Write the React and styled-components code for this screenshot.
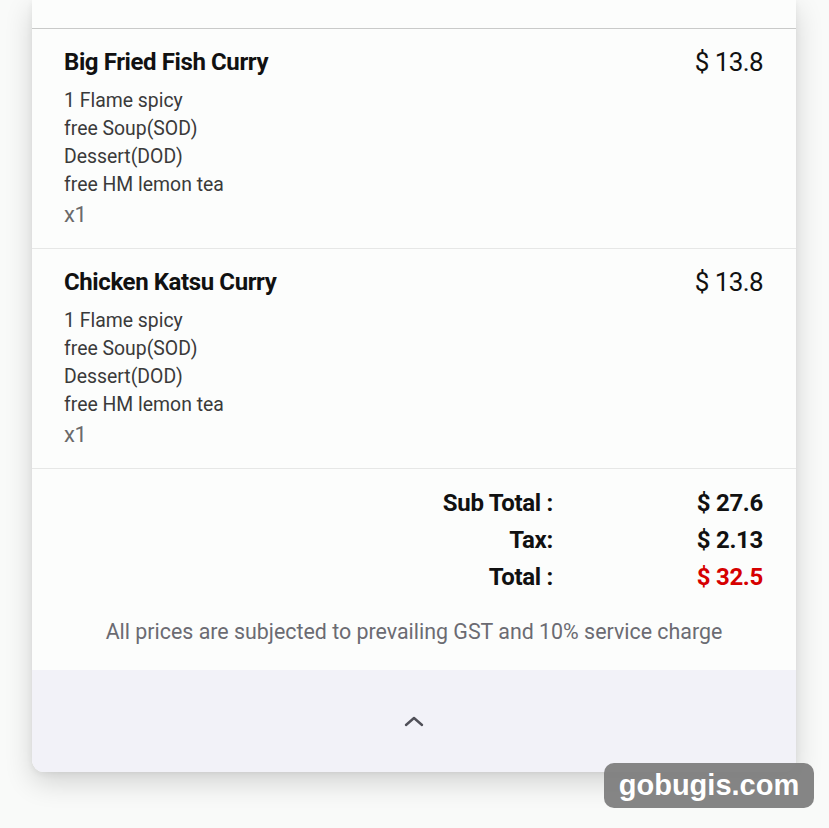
import React from "react";
import styled, { createGlobalStyle } from "styled-components";

const Global = createGlobalStyle`
  html, body { margin: 0; padding: 0; background: #f9faf9; }
  body { font-family: Roboto, "Noto Sans", sans-serif; }
`;

const Page = styled.div`
  position: relative;
  width: 829px;
  height: 828px;
  padding: 0 33px 0 32px;
  box-sizing: border-box;
  overflow: hidden;
`;

const Card = styled.div`
  background: #fcfdfc;
  border-radius: 0 0 12px 12px;
  box-shadow: 0 10px 28px rgba(0, 0, 0, 0.16), 0 2px 6px rgba(0, 0, 0, 0.06);
  overflow: hidden;
`;

const TopStrip = styled.div`
  height: 28px;
  border-bottom: 1px solid #c9cac9;
`;

const Item = styled.div`
  display: flex;
  justify-content: space-between;
  align-items: flex-start;
  padding: 17px 33px 19px 32px;
  border-bottom: 1px solid #e6e7e6;
`;

const ItemInfo = styled.div`
  display: flex;
  flex-direction: column;
`;

const Title = styled.div`
  font-size: 24px;
  line-height: 32px;
  font-weight: 700;
  color: #111;
  letter-spacing: -0.4px;
  margin-bottom: 9px;
`;

const Detail = styled.div`
  font-size: 19.4px;
  line-height: 28px;
  color: #3a3a3a;
`;

const Qty = styled.div`
  font-size: 22px;
  line-height: 28px;
  color: #6a6a6a;
  margin-top: 2px;
  letter-spacing: -0.4px;
`;

const Price = styled.div`
  font-size: 26px;
  line-height: 32px;
  color: #111;
  letter-spacing: -0.6px;
`;

const Totals = styled.div`
  display: grid;
  grid-template-columns: 1fr 210px;
  padding: 16px 33px 0 32px;
`;

const Label = styled.div`
  text-align: right;
  font-size: 24px;
  line-height: 37px;
  font-weight: 700;
  color: #111;
  letter-spacing: -0.3px;
`;

const Value = styled(Label)`
  color: ${(p) => (p.$red ? "#d60000" : "#111")};
`;

const Note = styled.div`
  text-align: center;
  font-size: 21.4px;
  line-height: 28px;
  color: #6b6b72;
  padding: 22px 0 24px;
`;

const Footer = styled.div`
  background: #f2f2f8;
  height: 102px;
  display: flex;
  align-items: center;
  justify-content: center;
`;

const Watermark = styled.div`
  position: absolute;
  left: 604px;
  top: 763px;
  width: 210px;
  height: 45px;
  border-radius: 10px;
  background: rgba(125, 125, 125, 0.94);
  color: #fff;
  font-family: "Liberation Sans", Arial, sans-serif;
  font-size: 29px;
  font-weight: 700;
  display: flex;
  align-items: center;
  justify-content: center;
`;

const items = [
  { name: "Big Fried Fish Curry", price: "$ 13.8" },
  { name: "Chicken Katsu Curry", price: "$ 13.8" },
];
const details = ["1 Flame spicy", "free Soup(SOD)", "Dessert(DOD)", "free HM lemon tea"];

export default function App() {
  return (
    <>
      <Global />
      <Page>
        <Card>
          <TopStrip />
          {items.map((it) => (
            <Item key={it.name}>
              <ItemInfo>
                <Title>{it.name}</Title>
                {details.map((d) => (
                  <Detail key={d}>{d}</Detail>
                ))}
                <Qty>x1</Qty>
              </ItemInfo>
              <Price>{it.price}</Price>
            </Item>
          ))}
          <Totals>
            <Label>Sub Total :</Label>
            <Value>$ 27.6</Value>
            <Label>Tax:</Label>
            <Value>$ 2.13</Value>
            <Label>Total :</Label>
            <Value $red>$ 32.5</Value>
          </Totals>
          <Note>All prices are subjected to prevailing GST and 10% service charge</Note>
          <Footer>
            <svg width="22" height="14" viewBox="0 0 22 14" fill="none">
              <path d="M3 11 L11 4 L19 11" stroke="#505058" strokeWidth="2.4" strokeLinecap="round" strokeLinejoin="round" />
            </svg>
          </Footer>
        </Card>
        <Watermark>gobugis.com</Watermark>
      </Page>
    </>
  );
}
